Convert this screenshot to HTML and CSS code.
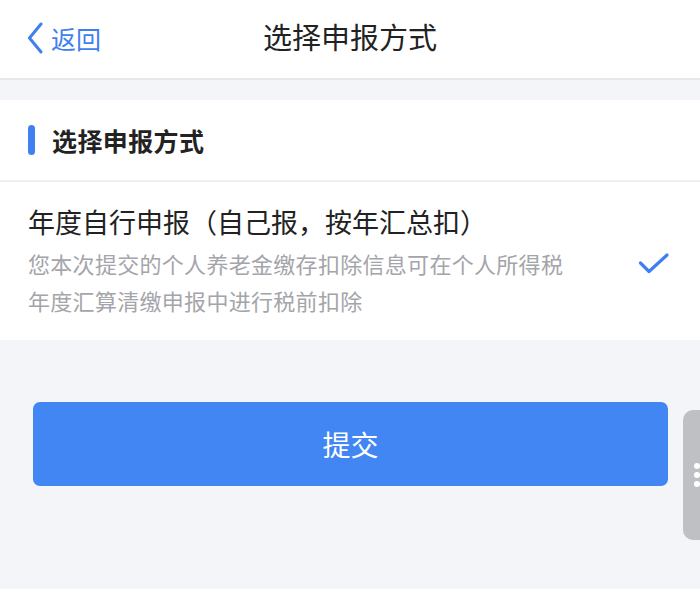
FILE: index.html
```html
<!DOCTYPE html>
<html lang="zh">
<head>
<meta charset="utf-8">
<link rel="stylesheet" href="styles.css">
</head>
<body>
<div class="page">
  <header class="nav">
    <div class="back">
      <svg class="chev" width="18" height="32" viewBox="0 0 18 32"><path d="M15 2 L3.5 16 L15 30" fill="none" stroke="#3f7ff0" stroke-width="3" stroke-linecap="round" stroke-linejoin="round"/></svg>
      <span class="back-text">返回</span>
    </div>
    <div class="title">选择申报方式</div>
  </header>
  <div class="gap"></div>
  <section class="card">
    <div class="sec-head"><span class="bar"></span><span class="sec-title">选择申报方式</span></div>
    <div class="option">
      <div class="opt-body">
        <div class="opt-title">年度自行申报（自己报，按年汇总扣）</div>
        <div class="opt-desc">您本次提交的个人养老金缴存扣除信息可在个人所得税<br>年度汇算清缴申报中进行税前扣除</div>
      </div>
      <svg class="check" width="32" height="24" viewBox="0 0 32 24"><path d="M2.5 11 L11 19.5 L29 3" fill="none" stroke="#3f7ff0" stroke-width="3.2" stroke-linecap="round" stroke-linejoin="round"/></svg>
    </div>
  </section>
  <div class="actions">
    <button class="submit">提交</button>
  </div>
  <div class="handle"><span></span><span></span><span></span></div>
</div>
</body>
</html>
```
FILE: styles.css
```css
* { box-sizing: border-box; }
html, body { margin: 0; padding: 0; }
body {
  background: #f4f5f9;
  font-family: "Noto Sans CJK SC", "Noto Sans", sans-serif;
  width: 700px;
  height: 589px;
  overflow: hidden;
}
.page { position: relative; width: 700px; height: 589px; }
.nav {
  height: 80px;
  background: #fff;
  border-bottom: 2px solid #e6e7eb;
  display: flex;
  align-items: center;
  justify-content: center;
  position: relative;
}
.back {
  position: absolute;
  left: 26px;
  top: 22px;
  display: flex;
  align-items: center;
  gap: 7px;
}
.chev { display: block; }
.back-text { color: #3f7ff0; font-size: 25px; line-height: 32px; }
.title { font-size: 29px; color: #222; line-height: 36px; margin-top: -6px; }
.gap { height: 20px; }
.card { background: #fff; }
.sec-head {
  height: 82px;
  display: flex;
  align-items: center;
  padding-left: 28px;
  border-bottom: 2px solid #eeeff2;
}
.bar {
  width: 7px;
  height: 30px;
  border-radius: 4px;
  background: #3f7ff0;
  margin-right: 17px;
}
.sec-title { font-size: 25px; font-weight: 700; color: #222; letter-spacing: 0.4px; }
.option {
  display: flex;
  align-items: center;
  padding: 22px 30px 22px 28px;
  height: 158px;
}
.opt-body { flex: 1; }
.opt-title { font-size: 27px; color: #222; line-height: 38px; }
.opt-desc { font-size: 22px; color: #a4a5aa; line-height: 37px; margin-top: 4px; letter-spacing: 0.3px; }
.check { display: block; margin-top: 6px; }
.actions { padding: 62px 32px 0 33px; }
.submit {
  width: 635px;
  height: 84px;
  border: none;
  border-radius: 7px;
  background: #4286f4;
  color: #fff;
  font-family: inherit;
  font-size: 28px;
  display: block;
}
.handle {
  position: absolute;
  left: 683px;
  top: 410px;
  width: 30px;
  height: 130px;
  background: #bfc0c3;
  border-radius: 10px;
  display: flex;
  flex-direction: column;
  justify-content: center;
  align-items: flex-start;
  gap: 3px;
  padding-left: 11px;
}
.handle span { width: 6px; height: 6px; border-radius: 3px; background: #fff; }
```
